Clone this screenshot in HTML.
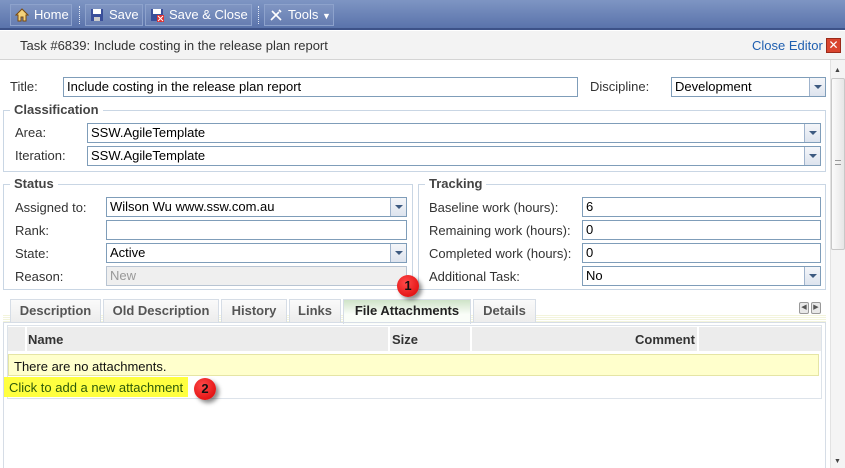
<!DOCTYPE html>
<html><head><style>
*{box-sizing:border-box;margin:0;padding:0}
body{width:845px;height:468px;overflow:hidden;background:#fff;font-family:"Liberation Sans","DejaVu Sans",sans-serif;font-size:13px;color:#222;position:relative}
.a{position:absolute}
.tb{left:0;top:0;width:845px;height:30px;background:linear-gradient(#7e95c3,#5a73ab);border-bottom:2px solid #3d5288}
.btn{top:4px;height:22px;border:1px solid #8da2cc;color:#fff;font-size:13px;line-height:20px;padding-left:23px;background:rgba(255,255,255,.06)}
.ic{position:absolute;left:4px;top:3px;width:14px;height:14px}
.sep{top:6px;width:0;height:18px;border-left:1px dotted #dfe6f5}
.hdr{left:0;top:31px;width:845px;height:29px;background:#f3f3f3;border-bottom:1px solid #d4d4d4}
.lbl{font-size:13px;color:#333}
.in{background:#fff;border:1px solid #7f9db9;height:20px;font-size:13px;line-height:18px;padding-left:3px;color:#000}
.dd{position:absolute;right:0;top:0;width:16px;height:18px;border-left:1px solid #9fb3cc;background:linear-gradient(#f4f6f9,#dde4ee)}
.dd:after{content:"";position:absolute;left:4px;top:7px;border-left:4px solid transparent;border-right:4px solid transparent;border-top:4px solid #3d5a80}
.fs{border:1px solid #c9d6e4}
.lg{background:#fff;font-weight:bold;color:#444;font-size:13px;padding:0 4px;line-height:14px}
.tab{top:299px;height:24px;border:1px solid #d6dde6;border-bottom:none;background:linear-gradient(#fafafa,#ececec);font-weight:bold;color:#555;font-size:13px;line-height:22px;text-align:center}
.red{width:22px;height:22px;border-radius:50%;background:radial-gradient(circle at 40% 35%,#ff4a4a,#d90000);color:#111;font-weight:bold;font-size:13px;text-align:center;line-height:22px;box-shadow:3px 3px 4px rgba(0,0,0,.45)}
</style></head><body>
<div class="a tb"></div>
<div class="a btn" style="left:10px;width:62px"><svg class="ic" viewBox="0 0 14 14"><path d="M7 1L1 7h2v6h3V9h2v4h3V7h2z" fill="#f4d27a" stroke="#7a4a10"/></svg>Home</div>
<div class="a sep" style="left:79px"></div>
<div class="a btn" style="left:85px;width:58px"><svg class="ic" viewBox="0 0 14 14"><rect x="1" y="1" width="12" height="12" fill="#3a4f9a"/><rect x="3" y="1" width="8" height="5" fill="#fff"/><rect x="4" y="9" width="6" height="4" fill="#ccc"/></svg>Save</div>
<div class="a btn" style="left:145px;width:107px"><svg class="ic" viewBox="0 0 14 14"><rect x="1" y="1" width="12" height="12" fill="#3a4f9a"/><rect x="3" y="1" width="8" height="5" fill="#fff"/><rect x="7" y="7" width="7" height="7" fill="#d33"/><path d="M8 8l5 5M13 8l-5 5" stroke="#fff"/></svg>Save &amp; Close</div>
<div class="a sep" style="left:258px"></div>
<div class="a btn" style="left:264px;width:70px"><svg class="ic" viewBox="0 0 14 14"><path d="M2 12L10 4M3 3l9 9M10 2l2 2" stroke="#fff" stroke-width="1.6"/></svg>Tools <span style="font-size:9px">▼</span></div>
<div class="a hdr"></div>
<div class="a" style="left:20px;top:38px;font-size:13px;color:#333">Task #6839: Include costing in the release plan report</div>
<div class="a" style="left:752px;top:38px;font-size:13px;color:#1f5fb0">Close Editor</div>
<div class="a" style="left:826px;top:38px;width:15px;height:15px;background:#d9442e;border:1px solid #9a2a1a;color:#fff;font-size:12px;line-height:13px;text-align:center;font-weight:bold">✕</div>

<div class="a lbl" style="left:10px;top:79px">Title:</div>
<div class="a in" style="left:63px;top:77px;width:515px">Include costing in the release plan report</div>
<div class="a lbl" style="left:590px;top:79px">Discipline:</div>
<div class="a in" style="left:671px;top:77px;width:155px">Development<div class="dd"></div></div>

<div class="a fs" style="left:3px;top:110px;width:823px;height:62px"></div>
<div class="a lg" style="left:10px;top:103px">Classification</div>
<div class="a lbl" style="left:15px;top:125px">Area:</div>
<div class="a in" style="left:87px;top:123px;width:734px">SSW.AgileTemplate<div class="dd"></div></div>
<div class="a lbl" style="left:15px;top:148px">Iteration:</div>
<div class="a in" style="left:87px;top:146px;width:734px">SSW.AgileTemplate<div class="dd"></div></div>

<div class="a fs" style="left:3px;top:184px;width:410px;height:106px"></div>
<div class="a lg" style="left:10px;top:177px">Status</div>
<div class="a fs" style="left:418px;top:184px;width:408px;height:106px"></div>
<div class="a lg" style="left:425px;top:177px">Tracking</div>

<div class="a lbl" style="left:15px;top:200px">Assigned to:</div>
<div class="a in" style="left:106px;top:197px;width:301px">Wilson Wu www.ssw.com.au<div class="dd"></div></div>
<div class="a lbl" style="left:15px;top:223px">Rank:</div>
<div class="a in" style="left:106px;top:220px;width:301px"></div>
<div class="a lbl" style="left:15px;top:246px">State:</div>
<div class="a in" style="left:106px;top:243px;width:301px">Active<div class="dd"></div></div>
<div class="a lbl" style="left:15px;top:269px">Reason:</div>
<div class="a in" style="left:106px;top:266px;width:301px;background:#efefef;border-color:#b8c4d2;color:#999">New</div>

<div class="a lbl" style="left:429px;top:200px">Baseline work (hours):</div>
<div class="a in" style="left:582px;top:197px;width:239px">6</div>
<div class="a lbl" style="left:429px;top:223px">Remaining work (hours):</div>
<div class="a in" style="left:582px;top:220px;width:239px">0</div>
<div class="a lbl" style="left:429px;top:246px">Completed work (hours):</div>
<div class="a in" style="left:582px;top:243px;width:239px">0</div>
<div class="a lbl" style="left:429px;top:269px">Additional Task:</div>
<div class="a in" style="left:582px;top:266px;width:239px">No<div class="dd"></div></div>

<div class="a" style="left:3px;top:314px;width:823px;height:8px;background:repeating-linear-gradient(#fff 0,#fff 1px,#f3f4dc 1px,#f3f4dc 2px)"></div>
<div class="a tab" style="left:10px;width:91px">Description</div>
<div class="a tab" style="left:103px;width:116px">Old Description</div>
<div class="a tab" style="left:221px;width:66px">History</div>
<div class="a tab" style="left:289px;width:52px">Links</div>
<div class="a tab" style="left:343px;width:128px;background:linear-gradient(#cfe3c8,#fafdf8 60%);color:#222;height:25px">File Attachments</div>
<div class="a tab" style="left:473px;width:63px">Details</div>
<div class="a" style="left:799px;top:302px;width:10px;height:12px;border:1px solid #999;border-radius:2px;background:#e8e8e8;font-size:7px;line-height:10px;text-align:center;color:#555">◀</div>
<div class="a" style="left:811px;top:302px;width:10px;height:12px;border:1px solid #999;border-radius:2px;background:#e8e8e8;font-size:7px;line-height:10px;text-align:center;color:#555">▶</div>

<div class="a" style="left:3px;top:322px;width:823px;height:146px;border:1px solid #d6dde6;border-bottom:none"></div>
<div class="a" style="left:7px;top:325px;width:815px;height:74px;border:1px solid #dde3ea"></div>
<div class="a" style="left:8px;top:327px;width:813px;height:24px;background:#ececec"></div>
<div class="a" style="left:25px;top:327px;width:2px;height:24px;background:#fff"></div>
<div class="a" style="left:388px;top:327px;width:2px;height:24px;background:#fff"></div>
<div class="a" style="left:470px;top:327px;width:2px;height:24px;background:#fff"></div>
<div class="a" style="left:697px;top:327px;width:2px;height:24px;background:#fff"></div>
<div class="a" style="left:28px;top:332px;font-weight:bold;color:#333">Name</div>
<div class="a" style="left:392px;top:332px;font-weight:bold;color:#333">Size</div>
<div class="a" style="left:635px;top:332px;font-weight:bold;color:#333">Comment</div>
<div class="a" style="left:8px;top:354px;width:811px;height:22px;background:#ffffcc;border:1px solid #e5e5a5"></div>
<div class="a" style="left:14px;top:359px;color:#111">There are no attachments.</div>
<div class="a" style="left:4px;top:377px;width:184px;height:20px;background:#ffff40"></div>
<div class="a" style="left:9px;top:380px;color:#2d5a0a">Click to add a new attachment</div>

<div class="a red" style="left:397px;top:275px">1</div>
<div class="a red" style="left:194px;top:378px">2</div>

<div class="a" style="left:830px;top:60px;width:15px;height:408px;background:#f4f4f4;border-left:1px solid #e2e2e2"></div>
<div class="a" style="left:831px;top:78px;width:14px;height:172px;background:linear-gradient(90deg,#fbfbfb,#e6e6e6);border:1px solid #c8c8c8;border-radius:2px"></div>
<div class="a" style="left:834px;top:67px;font-size:7px;color:#444">▲</div>
<div class="a" style="left:834px;top:458px;font-size:7px;color:#444">▼</div>
<div class="a" style="left:835px;top:160px;width:6px;height:5px;border-top:1px solid #999;border-bottom:1px solid #999"></div>
</body></html>
